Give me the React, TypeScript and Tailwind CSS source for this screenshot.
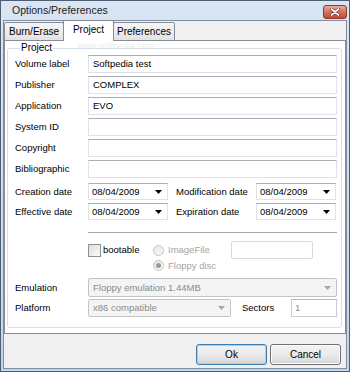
import type { ReactNode } from "react";

// Options/Preferences 대화상자 · Project 탭
export default function App() {
  return (
    <div className="flex h-[372px] w-[350px] flex-col border border-[#4f5f73] bg-gradient-to-b from-[#d9e5f2] to-[#c6d6e9] font-['Liberation_Sans',Arial,sans-serif] text-[9.5px] leading-none text-black">
      {/* 타이틀 바 */}
      <div className="flex h-[19px] shrink-0 items-center justify-between pl-[11px] pr-[2px]">
        <span className="text-[10.5px] text-[#1b1b1b]">Options/Preferences</span>
        <CloseButton />
      </div>

      {/* 클라이언트 영역 */}
      <div className="mx-[2px] mb-[2px] flex flex-1 flex-col border border-[#7f8fa3] bg-[#f0f0f0]">
        {/* 탭 */}
        <div className="relative z-10 -mb-px flex h-[20px] items-end">
          <Tab width="w-[60px]">Burn/Erase</Tab>
          <Tab width="w-[51px]" active>
            Project
          </Tab>
          <Tab width="w-[62px]">Preferences</Tab>
        </div>

        {/* 탭 패널 */}
        <div className="relative flex h-[294px] flex-col border border-[#898c95] bg-white pb-[5px] pl-[2px] pr-[3px] pt-[1px]">
          <span className="pointer-events-none absolute left-[72px] top-[1px] text-[9px] text-[#ececec]">
            www.softpedia.com
          </span>
          <fieldset className="relative flex-1 rounded-[3px] border border-[#d5dfe5] pb-0 pl-[7px] pr-[4px] pt-0">
            <legend className="ml-[5px] px-[1px] text-[10px] leading-[12px]">Project</legend>

            <div className="mt-[1px] flex flex-col gap-[3px]">
              <TextRow label="Volume label" value="Softpedia test" />
              <TextRow label="Publisher" value="COMPLEX" />
              <TextRow label="Application" value="EVO" />
              <TextRow label="System ID" value="" />
              <TextRow label="Copyright" value="" />
              <TextRow label="Bibliographic" value="" />
            </div>

            {/* 날짜 */}
            <div className="mt-[5px] flex flex-col gap-[3px]">
              <div className="flex h-[17px] items-center">
                <span className="w-[73px]">Creation date</span>
                <DateBox />
                <span className="ml-[8px] w-[80px]">Modification date</span>
                <DateBox />
              </div>
              <div className="flex h-[17px] items-center">
                <span className="w-[73px]">Effective date</span>
                <DateBox />
                <span className="ml-[8px] w-[80px]">Expiration date</span>
                <DateBox />
              </div>
            </div>

            <div className="ml-[73px] mt-[12px] border-t border-[#a9a9a9]" />

            {/* 부팅 옵션 */}
            <div className="mt-[8px] flex h-[18px] items-center pl-[73px]">
              <div className="flex w-[65px] items-center">
                <span className="size-[13px] border border-[#8e8f8f] bg-gradient-to-br from-[#dcdcdc] to-[#fbfbfb]" />
                <span className="ml-[2px]">bootable</span>
              </div>
              <div className="flex w-[78px] items-center text-[#a3a3a3]">
                <Radio />
                <span className="ml-[4px]">ImageFile</span>
              </div>
              <div className="h-[18px] w-[82px] rounded-[2px] border border-[#d9d9d9] bg-white" />
            </div>
            <div className="flex h-[13px] items-center pl-[138px] text-[#a3a3a3]">
              <Radio checked />
              <span className="ml-[4px]">Floppy disc</span>
            </div>

            {/* 에뮬레이션 */}
            <div className="mt-[6px] flex h-[19px] items-center">
              <span className="w-[73px]">Emulation</span>
              <SelectBox value="Floppy emulation 1.44MB" width="flex-1" />
            </div>
            <div className="mt-[2px] flex h-[18px] items-center">
              <span className="w-[73px]">Platform</span>
              <SelectBox value="x86 compatible" width="w-[143px]" />
              <span className="ml-[11px] w-[49px]">Sectors</span>
              <div className="flex h-[18px] flex-1 items-center border border-[#c9cdd1] border-t-[#b5b8bc] bg-white pl-[3px] text-[#8c8c8c]">
                1
              </div>
            </div>
          </fieldset>
        </div>

        {/* 버튼 */}
        <div className="flex flex-1 items-start justify-end gap-[3px] pr-[5px] pt-[10px]">
          <DialogButton primary>Ok</DialogButton>
          <DialogButton>Cancel</DialogButton>
        </div>
      </div>
    </div>
  );
}

function Tab({ children, width, active = false }: { children: ReactNode; width: string; active?: boolean }) {
  if (active) {
    return (
      <div
        className={`relative z-20 -mx-px flex h-[21px] ${width} items-center justify-center rounded-t-[2px] border border-b-0 border-[#898c95] bg-white pb-[2px] text-[10px]`}
      >
        {children}
      </div>
    );
  }
  return (
    <div
      className={`flex h-[19px] ${width} items-center justify-center rounded-t-[2px] border border-[#898c95] bg-gradient-to-b from-[#f6f6f6] to-[#e3e3e3] text-[10px]`}
    >
      {children}
    </div>
  );
}

function TextRow({ label, value }: { label: string; value: string }) {
  return (
    <div className="flex h-[18px] items-center">
      <span className="w-[73px]">{label}</span>
      <div className="flex h-[18px] flex-1 items-center border border-[#dde3ea] border-t-[#abadb3] bg-white pl-[4px]">
        {value}
      </div>
    </div>
  );
}

function DateBox() {
  return (
    <div className="flex h-[17px] w-[80px] items-center justify-between border border-[#dde3ea] border-t-[#abadb3] bg-white pl-[3px] pr-[5px]">
      <span>08/04/2009</span>
      <svg width={7} height={4} viewBox="0 0 7 4" aria-hidden="true">
        <path d="M0 0h7L3.5 4z" fill="#000" />
      </svg>
    </div>
  );
}

function SelectBox({ value, width }: { value: string; width: string }) {
  return (
    <div
      className={`flex h-full ${width} items-center justify-between rounded-[2px] border border-[#c2c5c8] bg-[#f4f4f4] pl-[4px] pr-[5px] text-[#8a8a8a]`}
    >
      <span>{value}</span>
      <svg width={7} height={4} viewBox="0 0 7 4" aria-hidden="true">
        <path d="M0 0h7L3.5 4z" fill="#a6a6a6" />
      </svg>
    </div>
  );
}

function Radio({ checked = false }: { checked?: boolean }) {
  return (
    <span className="flex size-[11px] shrink-0 items-center justify-center rounded-full border border-[#c4c4c4] bg-gradient-to-br from-[#e6e6e6] to-[#fafafa]">
      {checked && <span className="size-[5px] rounded-full bg-[#9a9a9a]" />}
    </span>
  );
}

function DialogButton({ children, primary = false }: { children: ReactNode; primary?: boolean }) {
  return (
    <button
      type="button"
      className={`h-[21px] w-[71px] rounded-[3px] border bg-gradient-to-b from-[#f2f2f2] via-[#ebebeb] to-[#d6d6d6] text-[10px] text-black ${
        primary ? "border-[#3c7fb1] shadow-[inset_0_0_0_1px_#9ad6f3]" : "border-[#707070] shadow-[inset_0_0_0_1px_#fcfcfc]"
      }`}
    >
      {children}
    </button>
  );
}

function CloseButton() {
  return (
    <button
      type="button"
      aria-label="닫기"
      className="mt-[2px] flex h-[14px] w-[24px] items-center justify-center rounded-[3px] border border-[#8c3a2f] bg-gradient-to-b from-[#e9aa9d] via-[#d2715f] to-[#c24a37]"
    >
      <svg width={10} height={8} viewBox="0 0 10 8" aria-hidden="true">
        <path d="M1.5 1l7 6M8.5 1l-7 6" stroke="#6b2a22" strokeWidth={3} strokeLinecap="round" />
        <path d="M1.5 1l7 6M8.5 1l-7 6" stroke="#fff" strokeWidth={1.8} strokeLinecap="round" />
      </svg>
    </button>
  );
}
